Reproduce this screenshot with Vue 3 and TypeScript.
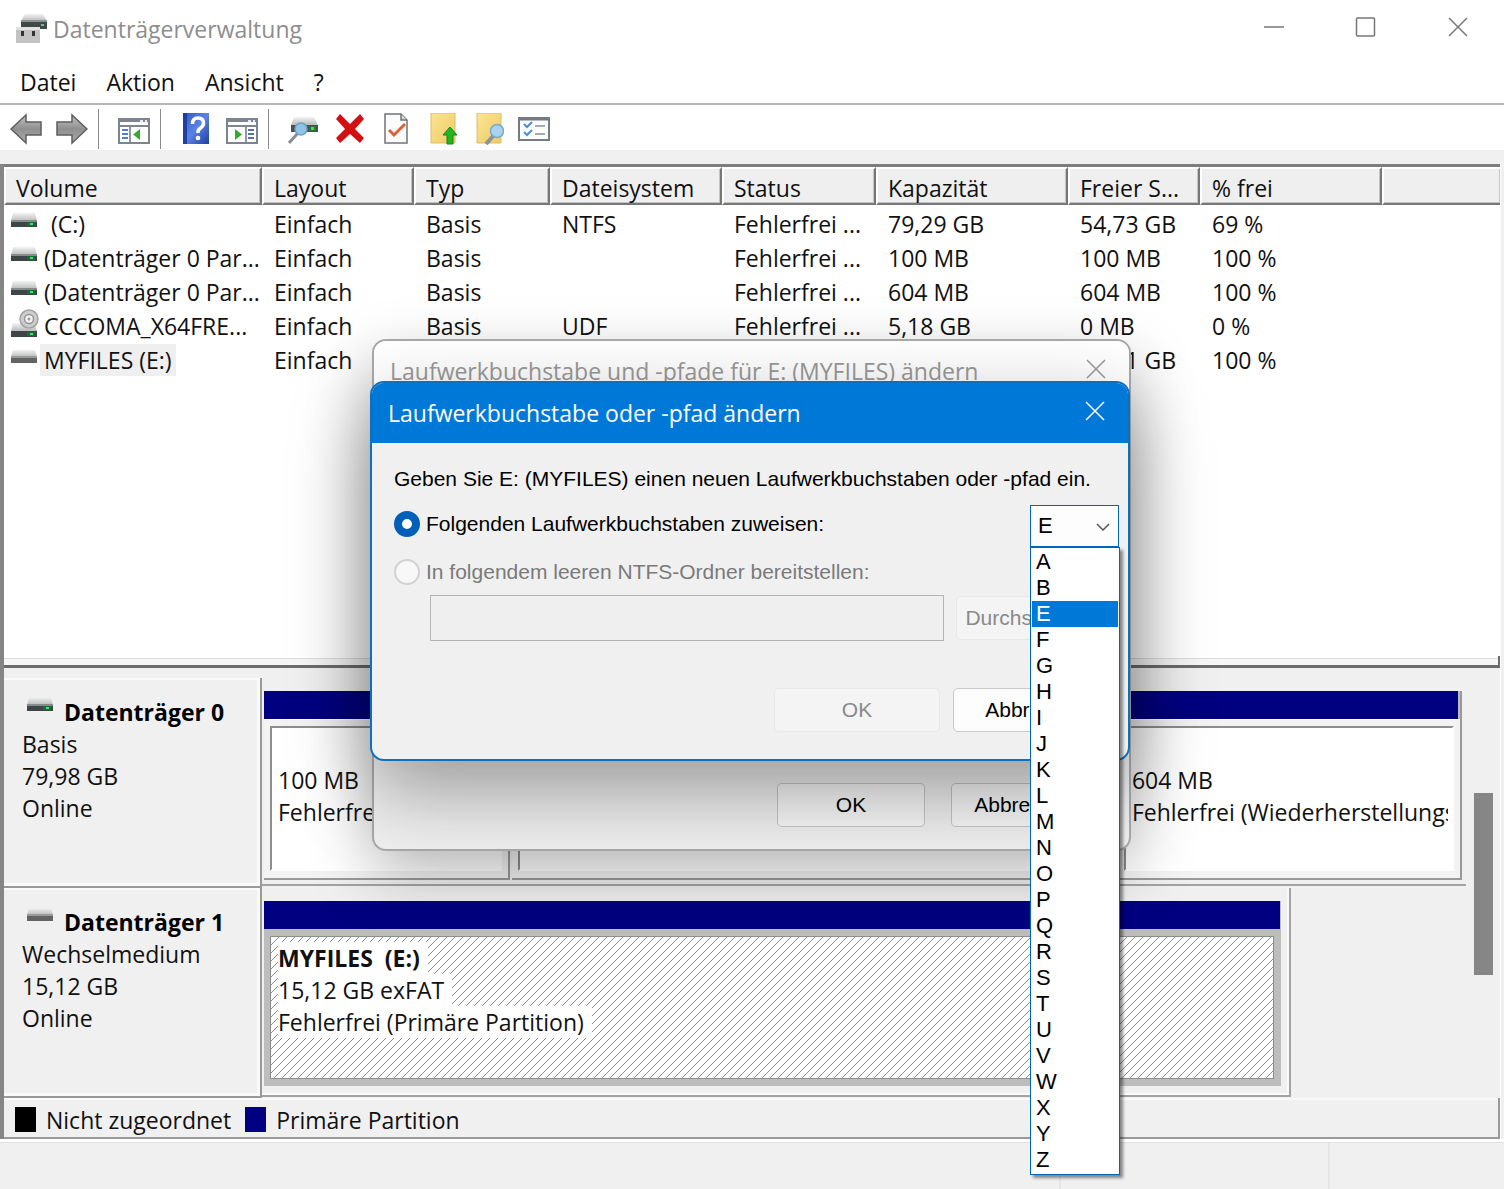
<script setup lang="ts">
import { ref } from 'vue'

type IconKind = 'disk' | 'optical' | 'removable'

interface Volume {
  icon: IconKind
  name: string
  layout: string
  type: string
  fs: string
  status: string
  capacity: string
  free: string
  percent: string
  indent?: boolean
  selected?: boolean
}

interface Partition {
  title: string
  lines: string[]
  share: number
  hatched?: boolean
}

interface Disk {
  icon: IconKind
  name: string
  kind: string
  size: string
  width: number
  partitions: Partition[]
}

const menus = ['Datei', 'Aktion', 'Ansicht', '?']
const columns = ['Volume', 'Layout', 'Typ', 'Dateisystem', 'Status', 'Kapazität', 'Freier S...', '% frei', '']

const volumes: Volume[] = [
  { icon: 'disk', name: '(C:)', layout: 'Einfach', type: 'Basis', fs: 'NTFS', status: 'Fehlerfrei ...', capacity: '79,29 GB', free: '54,73 GB', percent: '69 %', indent: true },
  { icon: 'disk', name: '(Datenträger 0 Par...', layout: 'Einfach', type: 'Basis', fs: '', status: 'Fehlerfrei ...', capacity: '100 MB', free: '100 MB', percent: '100 %' },
  { icon: 'disk', name: '(Datenträger 0 Par...', layout: 'Einfach', type: 'Basis', fs: '', status: 'Fehlerfrei ...', capacity: '604 MB', free: '604 MB', percent: '100 %' },
  { icon: 'optical', name: 'CCCOMA_X64FRE...', layout: 'Einfach', type: 'Basis', fs: 'UDF', status: 'Fehlerfrei ...', capacity: '5,18 GB', free: '0 MB', percent: '0 %' },
  { icon: 'removable', name: 'MYFILES (E:)', layout: 'Einfach', type: 'Basis', fs: 'exFAT', status: 'Fehlerfrei ...', capacity: '15,12 GB', free: '15,11 GB', percent: '100 %', selected: true },
]

const disks: Disk[] = [
  {
    icon: 'disk', name: 'Datenträger 0', kind: 'Basis', size: '79,98 GB', width: 100,
    partitions: [
      { title: '', lines: ['100 MB', 'Fehlerfrei (EFI-Systempartition)'], share: 246 },
      { title: '(C:)', lines: ['79,29 GB NTFS', 'Fehlerfrei (Startpartition)'], share: 607 },
      { title: '', lines: ['604 MB', 'Fehlerfrei (Wiederherstellungspartition)'], share: 345 },
    ],
  },
  {
    icon: 'removable', name: 'Datenträger 1', kind: 'Wechselmedium', size: '15,12 GB', width: 85.5,
    partitions: [
      { title: 'MYFILES  (E:)', lines: ['15,12 GB exFAT', 'Fehlerfrei (Primäre Partition)'], share: 1, hatched: true },
    ],
  },
]

const letters = ['A', 'B', ...'EFGHIJKLMNOPQRSTUVWXYZ']
const letter = ref('E')
const mode = ref('letter')
</script>

<template>
  <div class="window">
    <svg class="defs" aria-hidden="true">
      <defs>
        <linearGradient id="lid" x1="0" y1="0" x2="0" y2="1">
          <stop offset="0" stop-color="#f2f2f2" /><stop offset="1" stop-color="#b9bcbc" />
        </linearGradient>
        <linearGradient id="steel" x1="0" y1="0" x2="0" y2="1">
          <stop offset="0" stop-color="#c4c4c4" /><stop offset="0.5" stop-color="#8f8f8f" /><stop offset="1" stop-color="#adadad" />
        </linearGradient>
        <linearGradient id="book" x1="0" y1="0" x2="1" y2="1">
          <stop offset="0" stop-color="#2f57c4" /><stop offset="0.5" stop-color="#5b83e6" /><stop offset="1" stop-color="#1f3f9e" />
        </linearGradient>
        <linearGradient id="folder" x1="0" y1="0" x2="1" y2="1">
          <stop offset="0" stop-color="#fbe596" /><stop offset="1" stop-color="#efcb62" />
        </linearGradient>
        <symbol id="i-disk" viewBox="0 0 28 20">
          <path d="M3 1h22l2 8H1z" fill="url(#lid)" />
          <path d="M1 9h26v6H1z" fill="#3d4547" />
          <path d="M1 8h26v2H1z" fill="#858c8c" />
          <path d="M17 10h8v4h-8z" fill="#1d6a38" />
          <path d="M20 11h3v2h-3z" fill="#45e070" />
        </symbol>
        <symbol id="i-removable" viewBox="0 0 28 20">
          <path d="M3 2h22l2 7H1z" fill="url(#lid)" />
          <path d="M1 9h26v6H1z" fill="#636363" />
          <path d="M1 8h26v2H1z" fill="#9a9a9a" />
        </symbol>
        <symbol id="i-optical" viewBox="0 0 30 32">
          <path d="M3 15h22l2 8H1z" fill="url(#lid)" />
          <path d="M1 23h26v6H1z" fill="#3d4547" />
          <path d="M17 24h8v4h-8z" fill="#1d6a38" />
          <path d="M20 25h3v2h-3z" fill="#45e070" />
          <circle cx="19" cy="11" r="9" fill="#cdcdcd" stroke="#a2a2a2" stroke-width="1.500" />
          <circle cx="19" cy="11" r="4.500" fill="#f3f3f3" stroke="#959595" stroke-width="1.500" />
          <circle cx="19" cy="11" r="1.500" fill="#9a9a9a" />
        </symbol>
        <symbol id="i-close" viewBox="0 0 22 22">
          <path d="M2 2l18 18M20 2L2 20" fill="none" stroke="currentColor" stroke-width="1.500" />
        </symbol>
      </defs>
    </svg>

    <header class="titlebar">
      <svg class="app-icon" viewBox="0 0 32 32" aria-hidden="true">
        <path d="M9 1h18l4 7H5z" fill="url(#lid)" />
        <path d="M5 7h26v9H5z" fill="#414848" />
        <path d="M5 7h26v2H5z" fill="#8d9494" />
        <path d="M25 11h3v2h-3z" fill="#58c898" />
        <path d="M0 14h24v16H0z" fill="#c3c3c3" />
        <path d="M0 14h24v3H0z" fill="#e2e2e2" />
        <path d="M5 18h3v5H5zM16 18h3v5h-3z" fill="#333" />
      </svg>
      <h1>Datenträgerverwaltung</h1>
      <div class="controls">
        <button type="button" aria-label="Minimieren"><svg width="22" height="22" viewBox="0 0 22 22"><path d="M1 11h20" stroke="#777" stroke-width="1.500" /></svg></button>
        <button type="button" aria-label="Maximieren"><svg width="22" height="22" viewBox="0 0 22 22"><rect x="1.500" y="2" width="18" height="18" rx="1" fill="none" stroke="#777" stroke-width="1.500" /></svg></button>
        <button type="button" aria-label="Schließen"><svg width="22" height="22"><use href="#i-close" /></svg></button>
      </div>
    </header>

    <nav class="menubar">
      <button v-for="m in menus" :key="m" type="button">{{ m }}</button>
    </nav>

    <div class="toolbar">
      <button type="button" aria-label="Zurück">
        <svg viewBox="0 0 32 32"><path d="M1 16L16 2v7h15v13H16v8z" fill="url(#steel)" stroke="#5e5e5e" stroke-width="1.500" /></svg>
      </button>
      <button type="button" aria-label="Vorwärts">
        <svg viewBox="0 0 32 32"><path d="M31 16L16 2v7H1v13h15v8z" fill="url(#steel)" stroke="#5e5e5e" stroke-width="1.500" /></svg>
      </button>
      <span class="sep" />
      <button type="button" aria-label="Konsolenstruktur">
        <svg viewBox="0 0 32 32">
          <path d="M1 6h30v24H1z" fill="#fff" stroke="#7c8590" stroke-width="2" />
          <path d="M1 8h30M1 13h30" stroke="#7c8590" stroke-width="2" />
          <path d="M22 8h3M27 8h2" stroke="#e8edf2" stroke-width="2" />
          <path d="M12 14v15" stroke="#8f98a3" stroke-width="2" />
          <path d="M4 17h6M4 21h6M4 25h6" stroke="#4f7fd0" stroke-width="2" />
          <path d="M22 16v11l-7-5.500z" fill="#2fae2c" />
        </svg>
      </button>
      <span class="sep" />
      <button type="button" aria-label="Hilfe">
        <svg viewBox="0 0 32 32">
          <path d="M3 0h26v31H3z" fill="url(#book)" />
          <path d="M3 0h4v31H3z" fill="#1d3f9f" />
          <path d="M12.500 11q0-6 5.500-6t5.500 5q0 3-3 5t-2.500 5" fill="none" stroke="#fff" stroke-width="3.500" />
          <circle cx="18" cy="25" r="2.300" fill="#fff" />
        </svg>
      </button>
      <button type="button" aria-label="Aktionsbereich">
        <svg viewBox="0 0 32 32">
          <path d="M1 6h30v24H1z" fill="#fff" stroke="#7c8590" stroke-width="2" />
          <path d="M1 8h30M1 13h30" stroke="#7c8590" stroke-width="2" />
          <path d="M22 8h3M27 8h2" stroke="#e8edf2" stroke-width="2" />
          <path d="M20 14v15" stroke="#8f98a3" stroke-width="2" />
          <path d="M22 17h6M22 21h6M22 25h6" stroke="#5a6fb5" stroke-width="2" />
          <path d="M9 16v11l7-5.500z" fill="#2fae2c" />
        </svg>
      </button>
      <span class="sep" />
      <button type="button" aria-label="Datenträger neu einlesen">
        <svg viewBox="0 0 32 32">
          <path d="M6 4h20l4 8H3z" fill="url(#lid)" />
          <path d="M3 12h27v7H3z" fill="#4a5152" />
          <path d="M21 13h7v5h-7z" fill="#1f7a33" />
          <path d="M23 14h3v3h-3z" fill="#45e050" />
          <path d="M10 20L1 30" stroke="#8a8f93" stroke-width="3" />
          <circle cx="13" cy="16" r="6" fill="#8fc3e8" stroke="#6f9fc4" stroke-width="1.500" />
        </svg>
      </button>
      <button type="button" aria-label="Löschen">
        <svg viewBox="0 0 32 32"><path d="M6 1l10 10L26 1l4 5-9 10 9 9-4 5-10-9-10 9-4-5 9-9L2 6z" fill="#d40f14" /></svg>
      </button>
      <button type="button" aria-label="Eigenschaften">
        <svg viewBox="0 0 32 32">
          <path d="M5 1h16l6 6v23H5z" fill="#fbfbfb" stroke="#6f7378" stroke-width="1.500" />
          <path d="M21 1v6h6" fill="#d8d8d8" stroke="#6f7378" stroke-width="1.500" />
          <path d="M9 17l5 5L25 11" fill="none" stroke="#e0603a" stroke-width="3" />
        </svg>
      </button>
      <button type="button" aria-label="Ordner nach oben">
        <svg viewBox="0 0 32 32">
          <path d="M5 0h24v30H5z" fill="url(#folder)" stroke="#dfbd62" />
          <path d="M24 14l7 8h-4v9h-6v-9h-4z" fill="#22b422" stroke="#118a18" />
        </svg>
      </button>
      <button type="button" aria-label="Ordner suchen">
        <svg viewBox="0 0 32 32">
          <path d="M5 0h24v30H5z" fill="url(#folder)" stroke="#dfbd62" />
          <path d="M22 22l-8 9" stroke="#8c949b" stroke-width="4" />
          <circle cx="25" cy="18" r="6.500" fill="#a8d2ef" stroke="#7ba8c9" stroke-width="1.500" />
        </svg>
      </button>
      <button type="button" aria-label="Aufgabenliste">
        <svg viewBox="0 0 32 32">
          <path d="M1 5h30v22H1z" fill="#fbfcfd" stroke="#747b83" stroke-width="2" />
          <path d="M1 6h30" stroke="#747b83" stroke-width="3" />
          <path d="M6 11l3 3 5-5M6 19l3 3 5-5" fill="none" stroke="#4a90d9" stroke-width="2" />
          <path d="M17 13h10M17 21h10" stroke="#a4aab0" stroke-width="2" />
        </svg>
      </button>
    </div>

    <main class="panes">
      <section class="volumes">
        <table>
          <colgroup>
            <col class="c-vol"><col class="c-lay"><col class="c-typ"><col class="c-fs"><col class="c-sta"><col class="c-cap"><col class="c-free"><col class="c-pct"><col>
          </colgroup>
          <thead>
            <tr><th v-for="(c, i) in columns" :key="i" scope="col">{{ c }}</th></tr>
          </thead>
          <tbody>
            <tr v-for="(v, i) in volumes" :key="i">
              <td>
                <span class="vol">
                  <svg :class="['drive', { optical: v.icon === 'optical' }]"><use :href="'#i-' + v.icon" /></svg>
                  <span :class="['vol-name', { selected: v.selected, indent: v.indent }]">{{ v.name }}</span>
                </span>
              </td>
              <td>{{ v.layout }}</td>
              <td>{{ v.type }}</td>
              <td>{{ v.fs }}</td>
              <td>{{ v.status }}</td>
              <td>{{ v.capacity }}</td>
              <td>{{ v.free }}</td>
              <td>{{ v.percent }}</td>
              <td></td>
            </tr>
          </tbody>
        </table>
      </section>
      <div class="splitter" />

      <section class="disks">
        <div class="disk-list">
          <article v-for="d in disks" :key="d.name" class="disk">
            <div class="disk-label">
              <h2><svg class="drive"><use :href="'#i-' + d.icon" /></svg>{{ d.name }}</h2>
              <p>{{ d.kind }}</p>
              <p>{{ d.size }}</p>
              <p>Online</p>
            </div>
            <div class="graph">
              <div :class="['parts', { short: d.width < 100 }]" :style="{ width: d.width + '%' }">
                <div v-for="(p, i) in d.partitions" :key="i" :class="['part', { hatched: p.hatched }]" :style="{ flexGrow: p.share }">
                  <div class="bar" />
                  <div class="frame">
                    <div class="box">
                      <p class="part-title"><strong>{{ p.title }}</strong></p>
                      <p v-for="l in p.lines" :key="l"><span>{{ l }}</span></p>
                    </div>
                  </div>
                </div>
              </div>
            </div>
          </article>
        </div>
        <div class="scroll"><div class="thumb" /></div>
      </section>

      <footer class="legend">
        <i class="swatch black" />Nicht zugeordnet
        <i class="swatch navy" />Primäre Partition
      </footer>
    </main>
    <div class="statusbar"><span /><span /><span /></div>

    <section class="dialog back" role="dialog" aria-labelledby="back-title">
      <div class="dialog-title">
        <h2 id="back-title">Laufwerkbuchstabe und -pfade für E: (MYFILES) ändern</h2>
        <button type="button" aria-label="Schließen"><svg width="22" height="22"><use href="#i-close" /></svg></button>
      </div>
      <div class="actions">
        <button type="button" class="push">OK</button>
        <button type="button" class="push">Abbrechen</button>
      </div>
    </section>

    <section class="dialog front" role="dialog" aria-labelledby="front-title">
      <div class="dialog-title">
        <h2 id="front-title">Laufwerkbuchstabe oder -pfad ändern</h2>
        <button type="button" aria-label="Schließen"><svg width="22" height="22"><use href="#i-close" /></svg></button>
      </div>
      <form class="form" @submit.prevent>
        <p class="prompt">Geben Sie E: (MYFILES) einen neuen Laufwerkbuchstaben oder -pfad ein.</p>
        <div class="row">
          <label class="choice"><input v-model="mode" type="radio" name="mode" value="letter">Folgenden Laufwerkbuchstaben zuweisen:</label>
          <div class="combo">
            <select v-model="letter" aria-label="Laufwerkbuchstabe">
              <option v-for="l in letters" :key="l">{{ l }}</option>
            </select>
            <svg class="chevron" viewBox="0 0 14 8"><path d="M1 1l6 6 6-6" fill="none" stroke="#555" stroke-width="1.500" /></svg>
            <ul class="letters" role="listbox" aria-label="Laufwerkbuchstaben">
              <li v-for="l in letters" :key="l" role="option" :aria-selected="l === letter" @click="letter = l">{{ l }}</li>
            </ul>
          </div>
        </div>
        <label class="choice off"><input v-model="mode" type="radio" name="mode" value="folder" disabled>In folgendem leeren NTFS-Ordner bereitstellen:</label>
        <div class="row path">
          <input type="text" class="folder" disabled aria-label="NTFS-Ordner">
          <button type="button" class="push browse" disabled>Durchsuchen...</button>
        </div>
        <div class="actions">
          <button type="submit" class="push" disabled>OK</button>
          <button type="button" class="push">Abbrechen</button>
        </div>
      </form>
    </section>
  </div>
</template>

<style>
body {
  margin: 0;
  background: #f0f0f0;
}
</style>

<style scoped>
* {
  box-sizing: border-box;
}
h1, h2, p, ul {
  margin: 0;
  padding: 0;
  font-weight: 400;
}
button {
  border: 0;
  background: none;
  padding: 0;
  font: inherit;
  color: inherit;
}
svg {
  display: block;
  flex: none;
}
.defs {
  position: absolute;
  width: 0;
  height: 0;
}
.window {
  position: relative;
  display: flex;
  flex-direction: column;
  min-height: 100vh;
  overflow: hidden;
  background: #f0f0f0;
  color: #111;
  font: 23px/32px "Open Sans", "Noto Sans", sans-serif;
}

.titlebar {
  display: flex;
  align-items: center;
  height: 58px;
  padding-left: 16px;
  background: #fff;
  color: #8e8e8e;
}
.app-icon {
  width: 32px;
  height: 32px;
  margin-right: 5px;
}
h1 {
  flex: 1;
  font-size: 23px;
}
.controls {
  display: flex;
  align-self: flex-start;
  color: #777;
}
.controls button {
  display: flex;
  align-items: center;
  justify-content: center;
  width: 92px;
  height: 54px;
}
.menubar {
  display: flex;
  gap: 30px;
  height: 47px;
  padding: 8px 20px 0;
  background: #fff;
  border-bottom: 2px solid #b8b8b8;
}
.menubar button {
  height: 32px;
}
.toolbar {
  display: flex;
  align-items: center;
  height: 45px;
  padding: 2px 0 0 3px;
  background: #fff;
}
.toolbar button {
  display: flex;
  justify-content: center;
  width: 46px;
}
.toolbar svg {
  width: 32px;
  height: 32px;
}
.sep {
  width: 1px;
  height: 40px;
  margin: 0 12px 0 3px;
  background: #8c8c8c;
}

.panes {
  display: flex;
  flex: 1;
  flex-direction: column;
  margin: 14px 3px 0 0;
  border-left: 4px solid #858585;
  border-right: 1px solid #fff;
}
.volumes {
  flex: 1;
  background: #fff;
  border-top: 3px solid #7d7d7d;
}
table {
  width: 100%;
  border-collapse: separate;
  border-spacing: 0;
  table-layout: fixed;
}
.c-vol { width: 258px; }
.c-lay { width: 152px; }
.c-typ { width: 136px; }
.c-fs { width: 172px; }
.c-sta { width: 154px; }
.c-cap { width: 192px; }
.c-free { width: 132px; }
.c-pct { width: 182px; }
th {
  height: 38px;
  padding: 4px 0 0 10px;
  background: #efefef;
  border: 2px solid #fff;
  border-right-color: #777;
  border-bottom-color: #777;
  box-shadow: inset -1px -1px #c4c4c4;
  font-weight: 400;
  line-height: 28px;
  text-align: left;
  white-space: nowrap;
}
th:last-child {
  border-right: 0;
}
tbody::before {
  content: "";
  display: block;
  height: 2px;
}
td {
  height: 34px;
  padding: 0 0 0 12px;
  line-height: 34px;
  white-space: nowrap;
}
td:first-child {
  padding-left: 6px;
}
.vol {
  display: flex;
  align-items: center;
  height: 34px;
}
.drive {
  width: 28px;
  height: 20px;
}
.vol .drive {
  margin-bottom: 4px;
}
.vol .optical {
  width: 30px;
  height: 32px;
  margin: 0 -2px 4px 0;
}
.vol-name {
  height: 32px;
  margin-left: 2px;
  padding: 0 4px;
  line-height: 32px;
}
.vol-name.indent {
  padding-left: 11px;
}
.vol-name.selected {
  background: #efefef;
}
.splitter {
  height: 12px;
  border: solid #6c6c6c;
  border-width: 0 2px 3px 0;
  background: linear-gradient(#fff 2px, #ddd 2px, #ddd 3px, #f6f6f6 3px);
}

.disks {
  display: flex;
  padding-top: 10px;
}
.disk-list {
  flex: 1;
  min-width: 0;
}
.disk {
  display: flex;
  height: 210px;
}
.disk-label {
  width: 258px;
  padding: 18px 0 0 18px;
  border-right: 2px solid #999;
  border-bottom: 2px solid #999;
  box-shadow: inset -3px -3px #f9f9f9, inset 0 2px #fafafa;
}
.disk-label h2 {
  display: flex;
  gap: 10px;
  padding-left: 4px;
  color: #000;
  font-size: 23px;
  font-weight: 700;
}
.graph {
  flex: 1;
  min-width: 0;
  height: 208px;
  border-bottom: 2px solid #a3a3a3;
}
.disk + .disk .graph {
  height: 210px;
  border-bottom: 0;
}
.parts {
  display: flex;
  gap: 2px;
  height: 202px;
  padding: 13px 4px 0 2px;
}
.parts.short {
  height: 209px;
  padding: 13px 8px 9px 2px;
  border-right: 2px solid #a3a3a3;
  border-bottom: 2px solid #a3a3a3;
  box-shadow: inset -2px -2px #fafafa;
}
.part {
  display: flex;
  flex: 1 1 0;
  flex-direction: column;
  min-width: 0;
  border-right: 2px solid #999;
  border-bottom: 2px solid #999;
}
.bar {
  flex: none;
  height: 28px;
  background: #000080;
}
.part:last-child:not(.hatched) .bar {
  border-right: 2px solid #bdbdbd;
}
.frame {
  flex: 1;
  min-height: 0;
  padding: 6px 6px 7px;
  background: #f3f3f3;
  border-top: 1px solid #fff;
}
.box {
  height: 100%;
  overflow: hidden;
  padding: 4px 4px 0 6px;
  background: #fff;
  border: 2px solid #8d8d8d;
  border-right-color: #fff;
  border-bottom-color: #fff;
  white-space: nowrap;
}
.box p {
  height: 32px;
  overflow: hidden;
}
.part-title {
  font-size: 23px;
  white-space: pre;
}
.hatched {
  border-color: #bdbdbd;
  border-width: 0 1px 0 0;
}
.hatched .frame {
  background: #bdbdbd;
  border-color: #bdbdbd;
}
.hatched .box {
  padding: 5px 7px 0;
  border: 1px solid #8d8d8d;
  background: linear-gradient(135deg, #fff 46%, #8c8c8c 46%, #8c8c8c 54%, #fff 54%) 0 0 / 8px 8px;
}
.hatched .box p > * {
  display: inline-block;
  height: 32px;
  padding-right: 8px;
  background: #fff;
}
.scroll {
  width: 34px;
  padding: 115px 7px 0 8px;
}
.thumb {
  height: 182px;
  background: #868686;
}
.legend {
  display: flex;
  align-items: center;
  height: 41px;
  padding: 4px 0 0 11px;
  border: solid #999;
  border-width: 0 2px 2px 0;
  box-shadow: inset 0 2px #fafafa;
}
.swatch {
  width: 21px;
  height: 25px;
  margin-right: 10px;
  background: #000;
}
.swatch.navy {
  margin-left: 14px;
  background: #000080;
}
.statusbar {
  display: flex;
  height: 50px;
  padding-top: 4px;
  background: linear-gradient(#fff 3px, #e0e0e0 3px, #e0e0e0 4px, #f0f0f0 4px);
}
.statusbar span {
  flex: 1062;
  border-right: 2px solid #e6e6e6;
}
.statusbar span:nth-child(2) { flex-grow: 268; }
.statusbar span:nth-child(3) { flex-grow: 174; border: 0; }

.dialog {
  position: absolute;
  display: flex;
  flex-direction: column;
  border-radius: 14px;
  background: #f0f0f0;
  color: #000;
  font: 21px/26px "Liberation Sans", Arial, sans-serif;
}
.back {
  z-index: 1;
  top: 339px;
  left: calc(50% - 380px);
  width: 759px;
  height: 512px;
  border: 2px solid #a9a9a9;
  box-shadow: 0 24px 64px rgba(0, 0, 0, 0.27);
}
.front {
  z-index: 2;
  top: 381px;
  left: calc(50% - 382px);
  width: 760px;
  border: 2px solid #0c70c0;
  box-shadow: 0 30px 80px rgba(0, 0, 0, 0.37);
}
.dialog-title {
  display: flex;
  justify-content: space-between;
  height: 60px;
  padding: 14px 22px 0 16px;
  border-radius: 12px 12px 0 0;
  background: #fff;
  color: #999;
  font: 23px/32px "Open Sans", "Noto Sans", sans-serif;
}
.dialog-title h2 {
  font-size: 23px;
}
.dialog-title button {
  align-self: flex-start;
  padding-top: 3px;
}
.front .dialog-title {
  background: #0078d7;
  color: #fff;
}
.form {
  padding: 23px 9px 27px 22px;
}
.row {
  display: flex;
  align-items: center;
  justify-content: space-between;
}
.prompt {
  height: 39px;
  white-space: nowrap;
}
.choice {
  display: flex;
  align-items: center;
  gap: 6px;
  height: 36px;
  margin-bottom: 6px;
  color: #000;
}
.choice input {
  appearance: none;
  width: 26px;
  height: 26px;
  margin: 0;
  border: 8px solid #005fb8;
  border-radius: 50%;
  background: #fff;
}
.choice.off {
  height: 42px;
  margin: 3px 0 2px;
  color: #7a7a7a;
}
.choice.off input {
  border: 2px solid #d2d2d2;
  background: #f8f8f8;
}
.combo {
  position: relative;
  width: 89px;
  height: 43px;
  font-size: 22px;
}
select {
  appearance: none;
  width: 100%;
  height: 100%;
  padding: 0 7px;
  border: 1px solid #0067b8;
  border-bottom-width: 2px;
  border-radius: 0;
  background: #fdfdfd;
  color: #000;
  font: inherit;
}
.chevron {
  position: absolute;
  top: 18px;
  right: 9px;
  width: 14px;
  height: 8px;
}
.letters {
  position: absolute;
  z-index: 1;
  top: 42px;
  left: 0;
  width: 90px;
  padding: 1px;
  border: 1px solid #0067b8;
  background: #fff;
  box-shadow: 3px 3px 3px rgba(0, 0, 0, 0.45);
  list-style: none;
}
.letters li {
  height: 26px;
  padding-left: 4px;
}
.letters li[aria-selected="true"] {
  background: #0078d7;
  color: #fff;
}
.path {
  margin: 0 3px 0 36px;
}
.folder {
  width: 514px;
  height: 46px;
  border: 1px solid #b4b4b4;
  background: #efefef;
}
.push {
  height: 44px;
  border: 1px solid #c9c9c9;
  border-radius: 5px;
  background: #fdfdfd;
}
.push:disabled {
  border-color: #e8e8e8;
  background: #f4f4f4;
  color: #8a8a8a;
}
.browse {
  width: 160px;
}
.actions {
  display: flex;
  gap: 26px;
  justify-content: flex-end;
}
.front .actions {
  gap: 13px;
  margin-top: 47px;
}
.front .actions .push {
  width: 166px;
}
.back .actions {
  margin: auto 30px 22px 0;
}
.back .push {
  width: 148px;
  border-color: rgba(0, 0, 0, 0.2);
  background: #f8f8f8;
}
</style>
